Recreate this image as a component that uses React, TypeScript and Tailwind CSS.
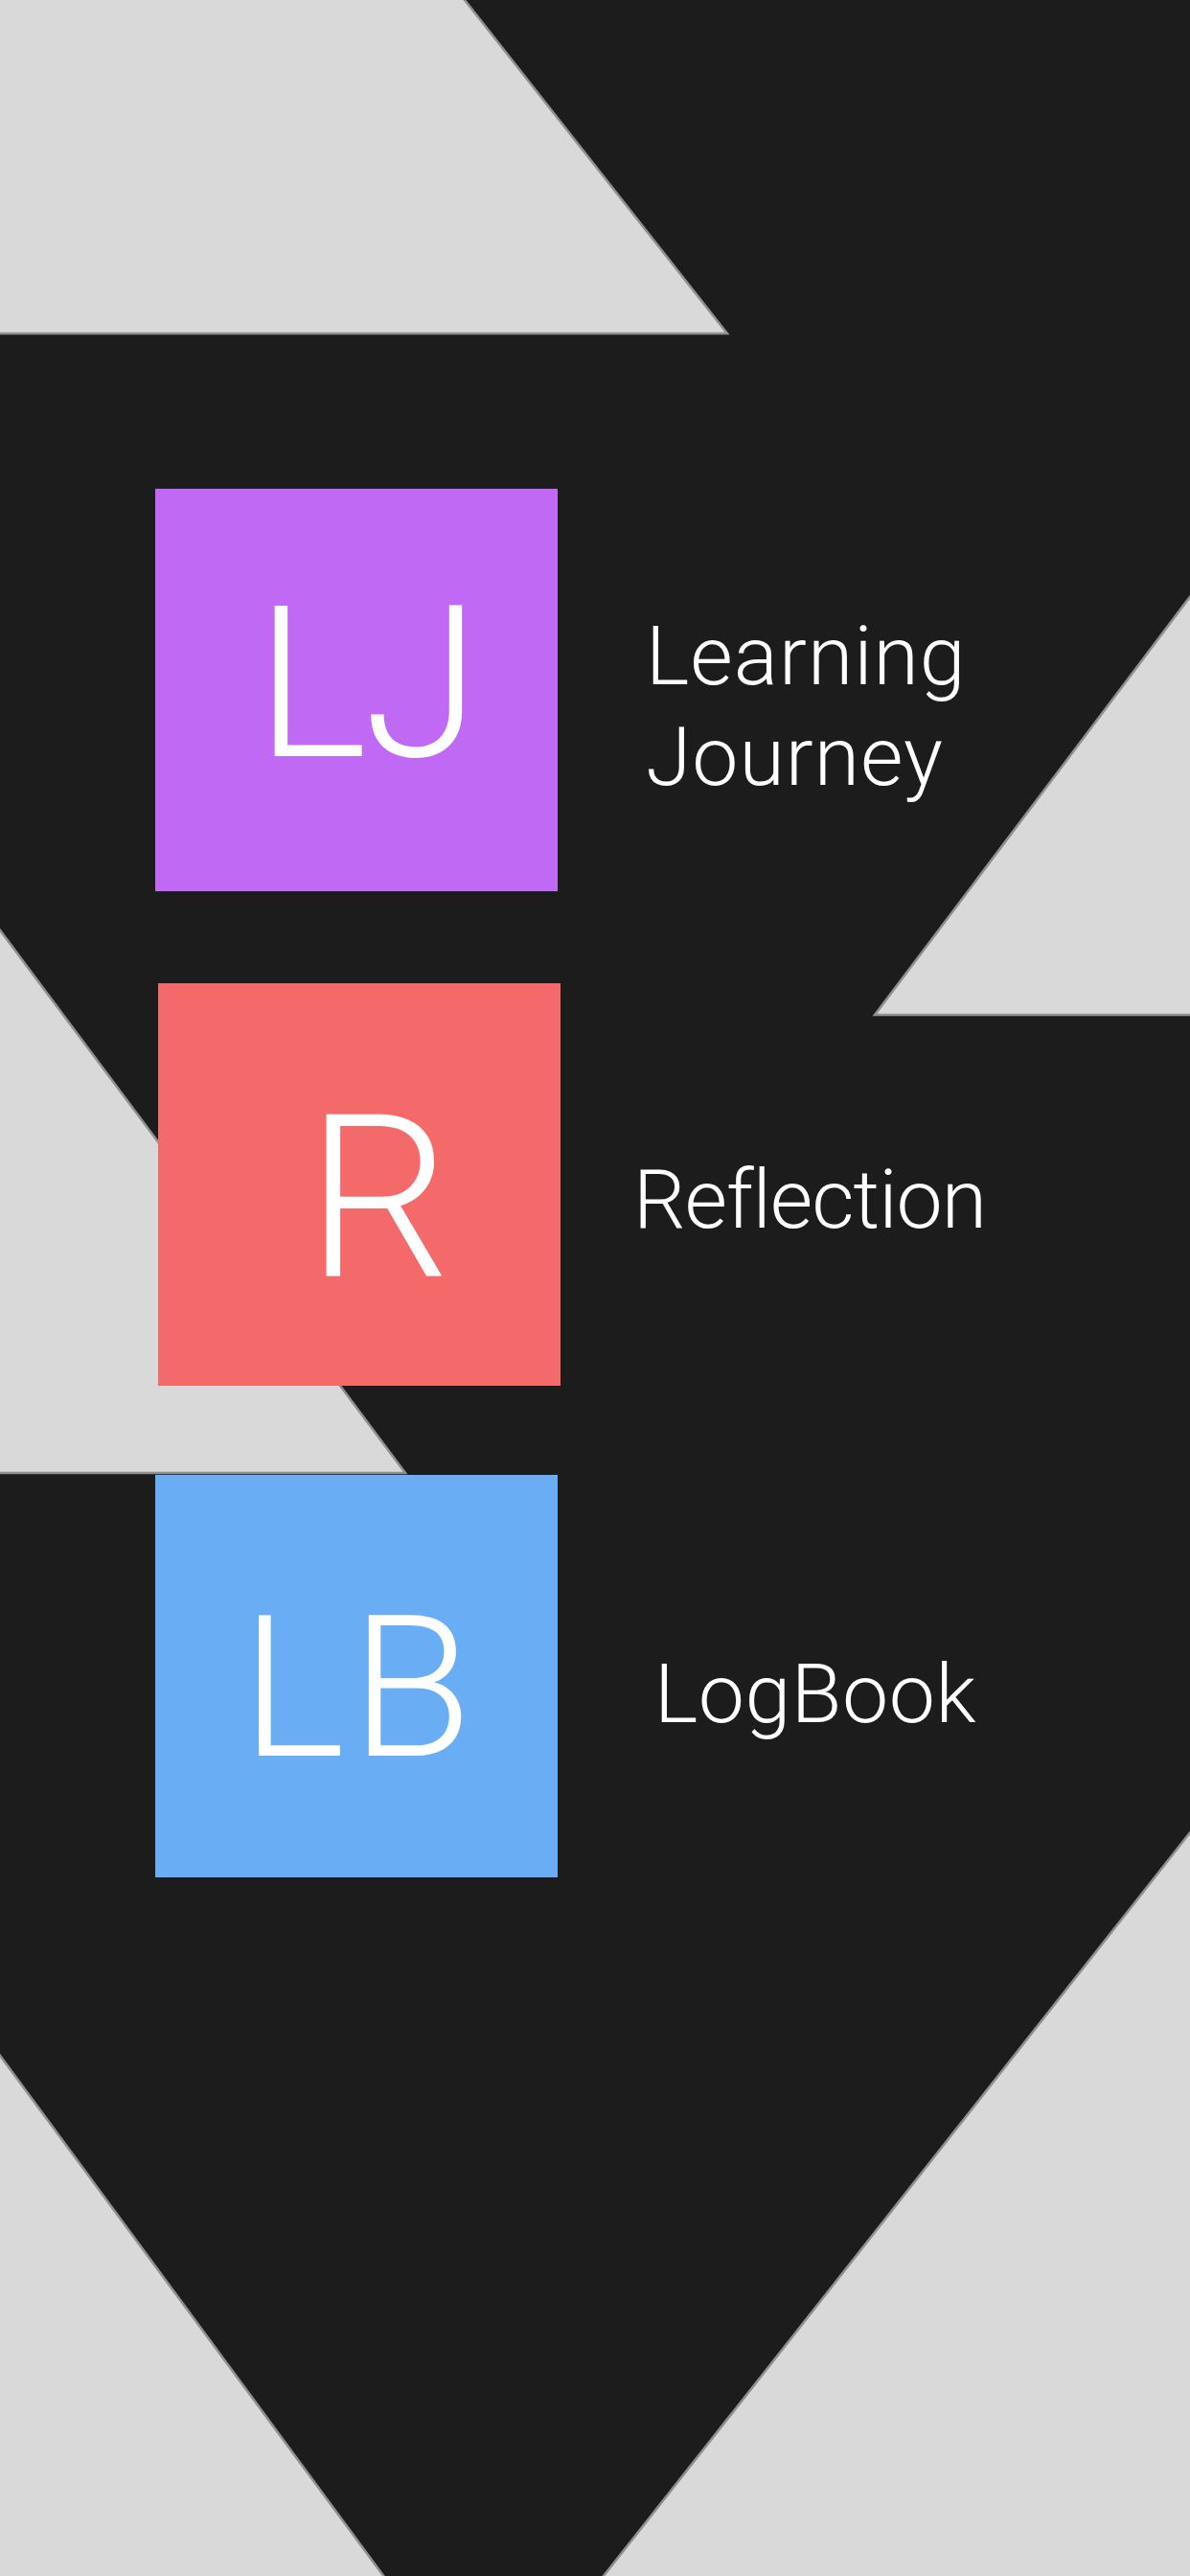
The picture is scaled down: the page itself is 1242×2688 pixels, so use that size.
import React from "react";

const Backdrop: React.FC = () => (
  <svg
    className="absolute inset-0 pointer-events-none"
    width="1242"
    height="2688"
    viewBox="0 0 1242 2688"
  >
    <g fill="#d9d9d9" stroke="#8f8f8f" strokeWidth="2.5">
      {/* top-left slab */}
      <polygon points="-5,-5 481,-5 759,348 -5,348" />
      {/* right wedge */}
      <polygon points="1247,616 1247,1059 913,1059" />
      {/* left wedge */}
      <polygon points="-5,964 423,1537 -5,1537" />
      {/* bottom corners */}
      <polygon points="-5,2138 404,2693 -5,2693" />
      <polygon points="1247,1906 626,2693 1247,2693" />
    </g>
  </svg>
);

export default function App() {
  return (
    <div className="relative w-[1242px] h-[2688px] overflow-hidden bg-[#1c1c1c] font-['Roboto','Liberation_Sans',sans-serif] font-light text-white">
      <Backdrop />

      <div className="relative flex flex-col pt-[510px] pl-[162px]">
        {/* Learning Journey */}
        <div className="flex items-start">
          <div className="w-[420px] h-[420px] bg-[#bf69f5] flex items-center justify-center">
            <span className="text-[221px] leading-none tracking-[-4px] ml-[20px] -mt-[14px]">LJ</span>
          </div>
          <div className="mt-[122px] pl-[92px] text-left text-[86px] leading-[105px] tracking-[1px]">
            Learning
            <br />
            Journey
          </div>
        </div>

        {/* Reflection */}
        <div className="flex items-start mt-[96px] ml-[3px]">
          <div className="w-[420px] h-[420px] bg-[#f46969] flex items-center justify-center">
            <span className="text-[238px] leading-none ml-[40px] mt-[30px]">R</span>
          </div>
          <div className="w-[526px] mt-[175px] text-center text-[86px] leading-[102px] -ml-[3px] tracking-[-1px]">
            Reflection
          </div>
        </div>

        {/* LogBook */}
        <div className="flex items-start mt-[93px]">
          <div className="w-[420px] h-[420px] bg-[#69adf5] flex items-center justify-center">
            <span className="text-[206px] leading-none tracking-[6px] ml-[6px] mt-[26px]">LB</span>
          </div>
          <div className="w-[526px] mt-[178px] text-center text-[86px] leading-[102px] ml-[6px] tracking-[0.5px]">
            LogBook
          </div>
        </div>
      </div>
    </div>
  );
}
